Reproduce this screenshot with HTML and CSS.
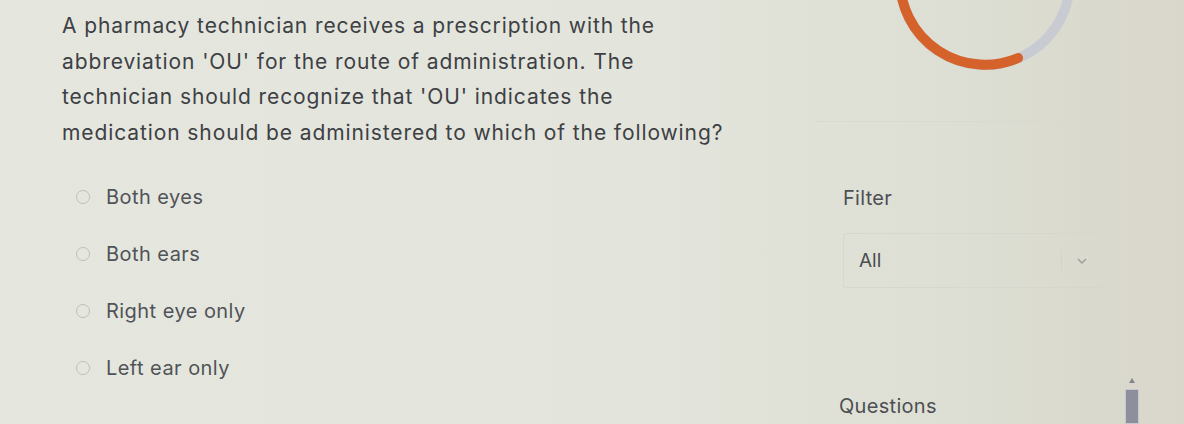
FILE: index.html
```html
<!DOCTYPE html>
<html>
<head>
<meta charset="utf-8">
<link rel="stylesheet" href="styles.css">
</head>
<body>
<div class="page">
  <main class="question-card">
    <p class="question">A pharmacy technician receives a prescription with the abbreviation 'OU' for the route of administration. The technician should recognize that 'OU' indicates the medication should be administered to which of the following?</p>
    <ul class="options">
      <li class="option"><span class="radio"></span><span class="label">Both eyes</span></li>
      <li class="option"><span class="radio"></span><span class="label">Both ears</span></li>
      <li class="option"><span class="radio"></span><span class="label">Right eye only</span></li>
      <li class="option"><span class="radio"></span><span class="label">Left ear only</span></li>
    </ul>
  </main>
  <aside class="side">
    <div class="progress">
      <svg width="200" height="80" viewBox="0 0 200 80">
        <circle cx="100" cy="-20" r="85" fill="none" stroke="#c9cbd3" stroke-width="10"/>
        <path d="M15 -20 A85 85 0 0 0 133 58" fill="none" stroke="#d5622a" stroke-width="10" stroke-linecap="round"/>
      </svg>
    </div>
    <div class="divider"></div>
    <div class="filter">
      <div class="filter-label">Filter</div>
      <div class="select">
        <span>All</span>
        <span class="sep"></span>
        <svg class="chev" width="12" height="8" viewBox="0 0 12 8"><path d="M2 2 L6 6 L10 2" fill="none" stroke="#9a9c9e" stroke-width="1.4"/></svg>
      </div>
    </div>
    <div class="questions-row">
      <span class="questions-label">Questions</span>
      <div class="scrollbar"><span class="arrow"></span><span class="thumb"></span></div>
    </div>
  </aside>
</div>
</body>
</html>
```
FILE: styles.css
```css
html, body {
  margin: 0;
  height: 100%;
}
body {
  width: 1184px;
  height: 424px;
  overflow: hidden;
  font-family: "Inter", "Liberation Sans", sans-serif;
  background: linear-gradient(90deg, #e5e7df 0%, #e3e5dc 55%, #dddfd4 80%, #d9d6cb 100%);
}
.page {
  display: grid;
  grid-template-columns: 770px 360px;
  gap: 38px;
  height: 424px;
}
.question-card {
  padding: 8px 0 0 62px;
  border-right: 1px solid #dfe1d8;
}
.question {
  margin: 0;
  width: 668px;
  font-size: 21px;
  line-height: 35.5px;
  color: #3d4044;
  letter-spacing: 0.9px;
}
.options {
  list-style: none;
  margin: 18px 0 0 0;
  padding: 0 0 0 14px;
}
.option {
  display: flex;
  align-items: center;
  gap: 16px;
  height: 57px;
}
.radio {
  width: 14px;
  height: 14px;
  border: 1.5px solid #bdbfba;
  border-radius: 50%;
  box-sizing: border-box;
}
.label {
  font-size: 20px;
  letter-spacing: 0.45px;
  color: #505357;
}
.side {
  display: flex;
  flex-direction: column;
  border-left: 1px solid #dfe1d8;
  padding-left: 34px;
}
.progress {
  height: 80px;
  padding-left: 42px;
}
.progress svg { display: block; }
.divider {
  height: 1px;
  margin: 41px 0 0 -28px;
  width: 320px;
  background: #d8dad1;
}
.filter {
  margin-top: 64px;
}
.filter-label {
  font-size: 20px;
  letter-spacing: 0.3px;
  color: #4c4f53;
  line-height: 24px;
}
.select {
  margin-top: 23px;
  width: 268px;
  height: 55px;
  box-sizing: border-box;
  border: 1px solid #d6d8cf;
  border-radius: 3px;
  display: flex;
  align-items: center;
  padding: 0 22px 0 15px;
  font-size: 19px;
  color: #4a4d51;
}
.select span:first-child { flex: 1; }
.sep {
  width: 1px;
  height: 20px;
  background: #d2d4cb;
  margin-right: 14px;
}
.chev { display: block; }
.questions-row {
  margin-top: 106px;
  display: flex;
  align-items: flex-start;
  justify-content: space-between;
  width: 300px;
  height: 24px;
  margin-left: -4px;
}
.questions-label {
  font-size: 20px;
  letter-spacing: 0.3px;
  color: #4c4f53;
  line-height: 24px;
}
.scrollbar {
  display: flex;
  flex-direction: column;
  align-items: center;
  width: 14px;
  height: 46px;
  margin-top: -16px;
}
.arrow {
  width: 0;
  height: 0;
  border-left: 3px solid transparent;
  border-right: 3px solid transparent;
  border-bottom: 5px solid #85868f;
  margin-bottom: 6px;
}
.thumb {
  width: 12px;
  flex: 1;
  background: #8e8f9c;
  border: 1px solid #c8c9cc;
  border-radius: 1px;
}
```
